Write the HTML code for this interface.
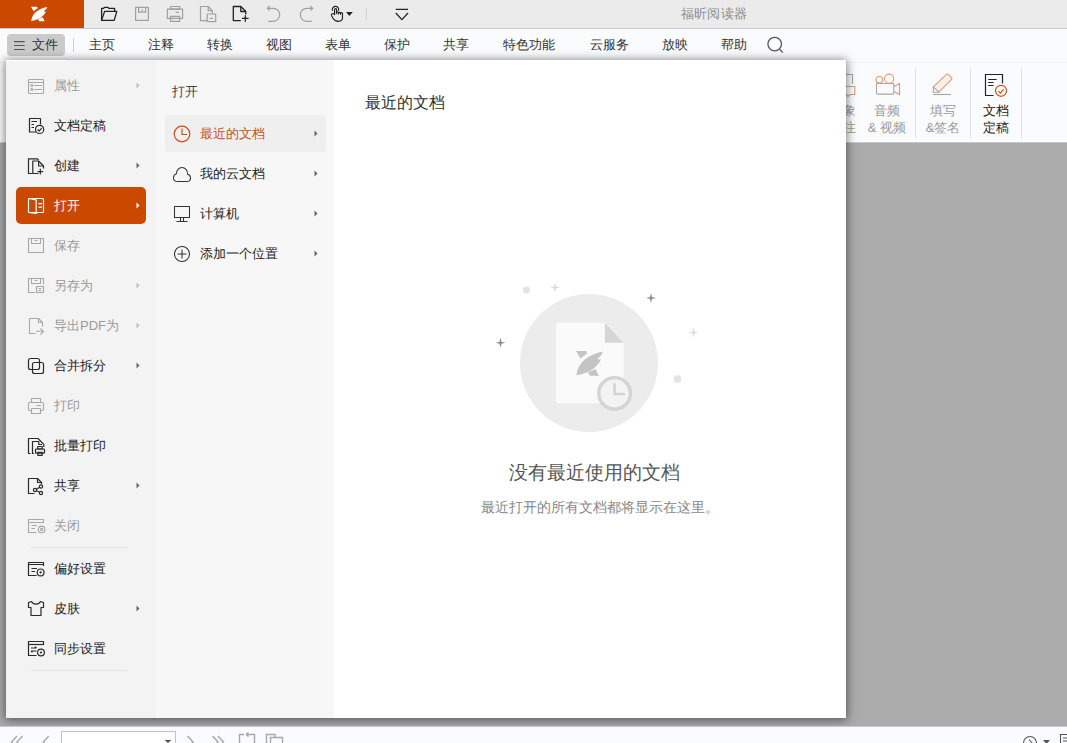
<!DOCTYPE html>
<html><head><meta charset="utf-8">
<style>
*{margin:0;padding:0;box-sizing:border-box}
html,body{width:1067px;height:743px;overflow:hidden;background:#ababab;font-family:"Liberation Sans",sans-serif;color:#333;position:relative}
.a{position:absolute;white-space:nowrap}
#title{left:0;top:0;width:1067px;height:28px;background:#ebebeb}
#tline{left:0;top:28px;width:1067px;height:1px;background:#c4c8d7}
#logo{left:0;top:0;width:84px;height:28px;background:#cb4800}
#apptitle{left:681px;top:6px;letter-spacing:0.2px;font-size:13px;color:#8c8c8c;line-height:16px}
#menubar{left:0;top:29px;width:1067px;height:113px;background:#fafbfd}
#rline{left:0;top:62px;width:1067px;height:1px;background:#f1f1f4}
#status{left:0;top:726px;width:1067px;height:17px;background:#fafbfd}
#sline{left:0;top:726px;width:1067px;height:1px;background:#c4c8d7}
.mi{top:37px;font-size:13px;line-height:16px;color:#333}
#filebtn{left:7px;top:33.6px;width:58px;height:22.7px;background:#cbcbcb;border-radius:4px}
#panel{left:6px;top:60px;width:840px;height:658px;background:#fff;box-shadow:0 1px 9px 1px rgba(0,0,0,.5)}
#col1{left:6px;top:60px;width:150px;height:658px;background:#f3f3f3}
#col2{left:156px;top:60px;width:178px;height:658px;background:#f7f7f7}
.it{left:54px;font-size:13px;line-height:16px;color:#222}
.dis{color:#9a9a9a}
#hl{left:16px;top:187px;width:130px;height:37px;background:#cb4800;border-radius:5px}
#hl2{left:165px;top:115px;width:161px;height:37px;background:#efefef;border-radius:4px}
.sep{left:31px;width:96px;height:1px;background:#e1e4ee}
.rt{font-size:13px;line-height:17px;color:#9a9a9a;text-align:center}
.rsep{top:68px;width:1px;height:70px;background:#dfe0e8}
</style></head><body>
<div id="title" class="a"></div>
<div id="logo" class="a"></div>
<div id="tline" class="a"></div>
<div id="apptitle" class="a">福昕阅读器</div>
<div id="menubar" class="a"></div>
<div id="rline" class="a"></div>
<div class="a" style="left:0;top:141px;width:1067px;height:1px;background:#fff"></div>
<div class="a" style="left:0;top:142px;width:1067px;height:1px;background:#c3c7d6"></div>
<div id="filebtn" class="a"></div>
<div class="a mi" style="left:32px">文件</div>
<div class="a" style="left:73px;top:38px;width:1px;height:14px;background:#d0d0d0"></div>
<svg class="a" style="left:0;top:28px" width="800" height="34" viewBox="0 28 800 34"><g fill="none" stroke="#555" stroke-width="1.2"><path d="M14,41.6 H24.7 M14,45.5 H24.7 M14,49.5 H24.7"/></g><g fill="none" stroke="#555" stroke-width="1.3"><circle cx="774.7" cy="44.1" r="6.8"/><path d="M779.6,49.2 L782.8,52.6"/></g></svg>
<div class="a mi" style="left:89px">主页</div>
<div class="a mi" style="left:148px">注释</div>
<div class="a mi" style="left:207px">转换</div>
<div class="a mi" style="left:266px">视图</div>
<div class="a mi" style="left:325px">表单</div>
<div class="a mi" style="left:384px">保护</div>
<div class="a mi" style="left:443px">共享</div>
<div class="a mi" style="left:503px">特色功能</div>
<div class="a mi" style="left:590px">云服务</div>
<div class="a mi" style="left:662px">放映</div>
<div class="a mi" style="left:721px">帮助</div>

<!-- ribbon right partial -->
<div class="a rt" style="left:828px;top:102px;width:30px">影象<br>批注</div>
<svg class="a" style="left:830px;top:70px" width="30" height="30" viewBox="830 70 30 30"><g fill="none" stroke-width="1.1"><path d="M838,83.5 V74.5 H852.5 V84" stroke="#a8a8a8"/><path d="M843,86.5 H854.8 V94.5 H850 L848,96.5 L846,94.5 H840 V86.5" stroke="#e09a78"/></g></svg>
<div class="a rt" style="left:862px;top:102px;width:50px">音频<br>&amp; 视频</div>
<div class="a rsep" style="left:915px"></div>
<div class="a rt" style="left:918px;top:102px;width:50px">填写<br>&amp;签名</div>
<div class="a rsep" style="left:970px"></div>
<div class="a rt" style="left:971px;top:102px;width:50px;color:#222">文档<br>定稿</div>
<div class="a rsep" style="left:1021px"></div>


<div id="panel" class="a"></div>
<div id="col1" class="a"></div>
<div id="col2" class="a"></div>
<div class="a" style="left:6px;top:60px;width:60px;height:1px;background:#fff"></div>
<div id="hl" class="a"></div>
<div id="hl2" class="a"></div>

<div class="a it dis" style="top:78px">属性</div>
<div class="a it" style="top:118px">文档定稿</div>
<div class="a it" style="top:158px">创建</div>
<div class="a it" style="top:198px;color:#fff">打开</div>
<div class="a it dis" style="top:238px">保存</div>
<div class="a it dis" style="top:278px">另存为</div>
<div class="a it dis" style="top:318px">导出PDF为</div>
<div class="a it" style="top:358px">合并拆分</div>
<div class="a it dis" style="top:398px">打印</div>
<div class="a it" style="top:438px">批量打印</div>
<div class="a it" style="top:478px">共享</div>
<div class="a it dis" style="top:518px">关闭</div>
<div class="a sep" style="top:547px"></div>
<div class="a it" style="top:561px">偏好设置</div>
<div class="a it" style="top:601px">皮肤</div>
<div class="a it" style="top:641px">同步设置</div>
<div class="a sep" style="top:670px"></div>

<div class="a it" style="left:172px;top:84px;color:#444">打开</div>
<div class="a it" style="left:200px;top:126px;color:#c8501c">最近的文档</div>
<div class="a it" style="left:200px;top:166px">我的云文档</div>
<div class="a it" style="left:200px;top:206px">计算机</div>
<div class="a it" style="left:200px;top:246px">添加一个位置</div>

<div class="a" style="left:365px;top:93px;font-size:16px;line-height:19px;color:#333">最近的文档</div>
<div class="a" style="left:509px;top:461px;font-size:19px;line-height:23px;color:#555">没有最近使用的文档</div>
<div class="a" style="left:481px;top:499px;font-size:13.5px;line-height:17px;color:#888">最近打开的所有文档都将显示在这里。</div>


<div id="status" class="a"></div>
<div id="sline" class="a"></div>
<div class="a" style="left:61px;top:731px;width:115px;height:14px;border:1px solid #bcc1d4;background:#fff"></div>
<svg class="a" style="left:0;top:0" width="1067" height="743" viewBox="0 0 1067 743">
<g fill="none" stroke-linejoin="round" stroke-linecap="butt">
<!-- logo -->
<g fill="#fff" stroke="none" transform="translate(31,6.8) scale(0.6,0.585) translate(-576,-351)"><path d="M576.1,351.1 H586.2 L587.1,353.6 L580.2,358.6 Z"/><path d="M576.4,375.2 C578,362 588,354.5 603,351.4 C602.2,354.2 600.3,357 597.4,358.3 L598.5,359.4 L601,359.4 C596.5,368 588.5,373.5 576.4,375.2 Z"/><path d="M587.9,372.4 L595.5,369 L598.8,375.7 L589.8,375.7 Z"/></g>
<!-- title bar icons -->
<g stroke="#222" stroke-width="1.3">
<path d="M101.6,20.4 V8.4 H103.6 L104.4,7.4 H108 L108.8,8.4 H114.6 V11.4"/>
<path d="M101.6,20.4 L104.6,11.4 H116.8 L114.2,20.4 Z"/>
</g>
<g stroke="#a0a0a0" stroke-width="1.2">
<rect x="135.6" y="7.4" width="12.8" height="12.9"/>
<path d="M138.6,7.4 V12.2 H145.6 V7.4 M141.4,10.2 H142.8"/>
<rect x="167.4" y="9.2" width="15.2" height="9.2"/>
<rect x="170.5" y="6.5" width="9.1" height="2.7"/>
<rect x="170.5" y="16.3" width="9.1" height="5.1"/>
<path d="M175.8,12.3 H179"/>
<path d="M207,20.6 H200.5 V6.5 H208.2 L212.4,10.7 V14"/>
<path d="M208.2,6.5 V10.7 H212.4"/>
<rect x="207.2" y="14" width="8.5" height="7.6"/>
<path d="M209.6,18.4 H213"/>
<path d="M279.6,14.8 M268.2,21.3 H273.3 A6.4,6.5 0 0 0 273.3,8.3 H267.4 M269.6,6 L267.3,8.3 L269.6,10.6"/>
<path d="M311.8,21.3 H306.7 A6.4,6.5 0 0 1 306.7,8.3 H312.6 M310.4,6 L312.7,8.3 L310.4,10.6"/>
</g>
<g stroke="#222" stroke-width="1.3">
<path d="M240.8,20.6 H233.3 V6.5 H240.8 L245.8,11.5 V14.5"/>
<path d="M240.8,6.5 V11.5 H245.8"/>
<path d="M242,18.4 H248.6 M245.3,15.2 V21.8"/>
<path d="M395.8,9.3 H408 M395.8,13 L401.9,19.6 L408,13"/>
</g>
<!-- hand -->
<g stroke="#222" stroke-width="1.15" fill="none" stroke-linecap="round">
<path d="M334.6,14.6 V9.6 A1,1 0 0 1 336.6,9.6 V13.6 M336.6,12.7 A0.95,0.95 0 0 1 338.5,12.7 V14 M338.5,13.3 A0.95,0.95 0 0 1 340.4,13.3 V14.3 M340.4,13.7 A1.05,1.05 0 0 1 342.5,13.7 V17.6 C342.5,20 340.6,21.4 338.2,21.4 C335.6,21.4 334,20 332.8,18 L331.4,15.3 C330.9,14.2 332.3,13.1 333.5,13.7 L334.6,14.6"/>
<path d="M332.4,10.4 A3.2,3.2 0 1 1 338.6,10.4"/>
</g>
<path d="M346,12 H352.8 L349.4,16 Z" fill="#222"/>
<path d="M366.3,8 V20.7" stroke="#cfcfcf" stroke-width="1"/>
</g>
</svg>


<svg class="a" style="left:0;top:0" width="1067" height="743" viewBox="0 0 1067 743">
<g fill="none" stroke-linejoin="round">
<!-- col1 icons -->
<g stroke="#a8a8a8" stroke-width="1.1">
<rect x="28.5" y="79.5" width="15" height="14" rx="0.8"/>
<path d="M28.5,82.5 H43.5 M34,85.5 H42 M34,89.5 H42"/>
<circle cx="31.8" cy="85.5" r="1"/><circle cx="31.8" cy="89.5" r="1"/>
</g>
<g stroke="#2a2a2a" stroke-width="1.2">
<path d="M36,132 H29.5 V118.5 H40.5 V124.5"/>
<path d="M31.5,121.5 H37 M31.5,124.5 H34 M31.5,127.5 H34"/>
<circle cx="39.6" cy="129.4" r="4.1"/>
<path d="M37.6,129.5 L39.1,131 L41.8,128.2"/>
</g>
<g stroke="#2a2a2a" stroke-width="1.2">
<path d="M32.5,173.5 H28.5 V158.8 H37.5 L38.6,160"/>
<path d="M38.5,173.5 H32.8 V161 H38.6 L43.5,166 V168.5"/>
<path d="M38.6,161 V166 H43.5"/>
<path d="M37.5,171.6 H43.2 M40.3,168.8 V174.5"/>
</g>
<g stroke="#fff" stroke-width="1.2">
<rect x="28.5" y="198.5" width="15" height="14" rx="1"/>
<path d="M28.5,198.5 L36.2,199.8 V213.4 L28.5,212.5"/>
<path d="M38.5,203.6 H42 M38.5,207.2 H42"/>
</g>
<g stroke="#a8a8a8" stroke-width="1.1">
<rect x="28.5" y="238.5" width="15" height="14"/>
<path d="M31.5,238.5 V243.5 H40.5 V238.5 M34.5,240.5 H37.5"/>
<path d="M35,292.5 H28.5 V278.5 H43.5 V284.5"/>
<path d="M31.5,278.5 V283.5 H40.5 V278.5 M34.5,280.5 H37.5"/>
<rect x="36.5" y="286.5" width="7" height="6"/>
<path d="M38.5,288.5 H41.5 M38.5,290.5 H41.5"/>
<path d="M35.5,333.5 H29.5 V318.5 H38.5 L42.5,322.5 V326.5"/>
<path d="M38.5,318.5 V322.5 H42.5"/>
<path d="M36,331.3 H43.5 M40.5,328.5 L43.5,331.3 L40.5,334.5"/>
</g>
<g stroke="#2a2a2a" stroke-width="1.2">
<rect x="28.5" y="358.5" width="11" height="11" rx="2"/>
<rect x="32.5" y="362.5" width="11" height="11" rx="2"/>
</g>
<g stroke="#a8a8a8" stroke-width="1.1">
<rect x="31.5" y="398.5" width="9" height="4"/>
<path d="M31.5,410.5 H30 A1.5,1.5 0 0 1 28.5,409 V404 A1.5,1.5 0 0 1 30,402.5 H42 A1.5,1.5 0 0 1 43.5,404 V409 A1.5,1.5 0 0 1 42,410.5 H40.5"/>
<rect x="31.5" y="408.5" width="9" height="5"/>
<path d="M36.5,405.5 H41"/>
</g>
<g stroke="#2a2a2a" stroke-width="1.2">
<path d="M30.5,453.5 H28.5 V438.5 H38 L43.8,444.3 V447"/>
<path d="M34,453.5 H32.5 V441.5 H38.8 V444.5 H42"/>
<rect x="37.8" y="446.5" width="4.4" height="2.5"/>
<rect x="35.5" y="449" width="9" height="4.2" rx="0.8"/>
<rect x="37.8" y="452.3" width="4.4" height="3"/>
<path d="M34.5,493.5 H28.5 V478.5 H37.5 L41.5,482.5 V484"/>
<path d="M37.5,478.5 V482.5 H41.5"/>
<circle cx="35" cy="490" r="1.6"/><circle cx="41" cy="486.5" r="1.6"/><circle cx="41" cy="493" r="1.6"/>
<path d="M36.4,489.2 L39.6,487.3 M36.4,490.8 L39.6,492.2"/>
</g>
<g stroke="#a8a8a8" stroke-width="1.1">
<path d="M36.5,532.5 H28.5 V519.5 H43.5 V523"/>
<path d="M28.5,522.5 H43.5 M31.5,525.5 H37 M31.5,528.5 H35"/>
<circle cx="41.6" cy="529.4" r="3.3"/>
<path d="M40.2,528 L43,530.8 M43,528 L40.2,530.8"/>
</g>
<g stroke="#2a2a2a" stroke-width="1.2">
<path d="M36.5,575.5 H28.5 V562.5 H43.5 V566"/>
<path d="M28.5,564.5 H43.5 M31.5,568.5 H37 M31.5,571.5 H35"/>
<circle cx="40.6" cy="572.4" r="3.4"/>
<circle cx="40.6" cy="572.4" r="1.1" fill="#2a2a2a" stroke="none"/>
<path d="M31.5,601.5 L28.5,602.5 V607.5 H31 V615.5 H41 V607.5 H43.5 V602.5 L40.5,601.5 C39,605 33,605 31.5,601.5 Z"/>
<path d="M36.5,655.5 H28.5 V641.5 H43.5 V645"/>
<path d="M28.5,644.5 H43.5"/>
<path d="M31,648 H36.5 M35,646.7 L36.5,648 M36.5,651 H31 M32.5,652.3 L31,651"/>
<circle cx="41" cy="652.5" r="3.4"/>
<circle cx="41" cy="652.5" r="1.1" fill="#2a2a2a" stroke="none"/>
</g>
<!-- col1 arrows -->
<g stroke="none">
<path d="M136.5,82.5 V88.5 L139.5,85.5 Z" fill="#bbb"/>
<path d="M136.5,162.5 V168.5 L139.5,165.5 Z" fill="#666"/>
<path d="M136.5,202.5 V208.5 L139.5,205.5 Z" fill="#fff"/>
<path d="M136.5,282.5 V288.5 L139.5,285.5 Z" fill="#bbb"/>
<path d="M136.5,322.5 V328.5 L139.5,325.5 Z" fill="#bbb"/>
<path d="M136.5,362.5 V368.5 L139.5,365.5 Z" fill="#666"/>
<path d="M136.5,482.5 V488.5 L139.5,485.5 Z" fill="#666"/>
<path d="M136.5,605.5 V611.5 L139.5,608.5 Z" fill="#666"/>
<path d="M314.5,130.5 V136.5 L317.5,133.5 Z" fill="#666"/>
<path d="M314.5,170.5 V176.5 L317.5,173.5 Z" fill="#666"/>
<path d="M314.5,210.5 V216.5 L317.5,213.5 Z" fill="#666"/>
<path d="M314.5,250.5 V256.5 L317.5,253.5 Z" fill="#666"/>
</g>
<!-- col2 icons -->
<g stroke="#c8501c" stroke-width="1.2">
<circle cx="182" cy="134" r="7.8"/>
<path d="M182,128.5 V134.5 H187"/>
</g>
<g stroke="#333" stroke-width="1.05">
<path d="M177.8,181.5 H186.8 C189,181.5 190.5,179.8 190.5,177.9 C190.5,176 189.3,174.6 187.6,174.3 C187.6,170.3 185.2,167.5 182,167.5 C178.8,167.5 176.4,170.3 176.4,173.8 C174.6,174.4 173.5,176 173.5,177.9 C173.5,180 175.3,181.5 177.8,181.5 Z"/>
<rect x="174.5" y="206.5" width="15" height="11"/>
<path d="M180.5,217.5 V221.5 M183.5,217.5 V221.5 M176.5,221.5 H187.5"/>
<circle cx="182" cy="254" r="7.5"/>
<path d="M182,249.5 V258.5 M177.5,254 H186.5"/>
</g>
</g>
</svg>


<svg class="a" style="left:0;top:0" width="1067" height="743" viewBox="0 0 1067 743">
<!-- empty state -->
<circle cx="589" cy="363" r="69" fill="#ececec"/>
<path d="M559,322.7 H604.8 L623.6,342.7 V400.3 A3,3 0 0 1 620.6,403.3 H559 A3,3 0 0 1 556,400.3 V325.7 A3,3 0 0 1 559,322.7 Z" fill="#fafafa"/>
<path d="M604.8,322.7 L623.6,342.7 H604.8 Z" fill="#d6d6d6"/>
<g fill="#c4c4c4"><g id="lg"><path d="M576.1,351.1 H586.2 L587.1,353.6 L580.2,358.6 Z"/>
<path d="M576.4,375.2 C578,362 588,354.5 603,351.4 C602.2,354.2 600.3,357 597.4,358.3 L598.5,359.4 L601,359.4 C596.5,368 588.5,373.5 576.4,375.2 Z"/>
<path d="M587.9,372.4 L595.5,369 L598.8,375.7 L589.8,375.7 Z"/></g></g>
<circle cx="614.6" cy="393.4" r="15.8" fill="#f3f3f3" stroke="#d4d4d4" stroke-width="3.4"/>
<path d="M614.6,384.3 V394 H624.2" fill="none" stroke="#d4d4d4" stroke-width="2.6" stroke-linecap="round" stroke-linejoin="round"/>
<circle cx="526.5" cy="290" r="3.5" fill="#e3e3e3"/>
<circle cx="677.5" cy="379" r="3.8" fill="#e3e3e3"/>
<g fill="#dcdcdc">
<path d="M555,282.5 L556,286.6 L560,287.5 L556,288.4 L555,292.5 L554,288.4 L550,287.5 L554,286.6 Z"/>
<path d="M693.5,327.5 L694.5,331.6 L698.5,332.5 L694.5,333.4 L693.5,337.5 L692.5,333.4 L688.5,332.5 L692.5,331.6 Z"/>
</g>
<g fill="#8e8e8e">
<path d="M651,293 L652,297 L656,298 L652,299 L651,303 L650,299 L646,298 L650,297 Z"/>
<path d="M500.5,337.8 L501.5,341.8 L505.5,342.8 L501.5,343.8 L500.5,347.8 L499.5,343.8 L495.5,342.8 L499.5,341.8 Z"/>
</g>
<!-- ribbon icons -->
<g fill="none" stroke-width="1.1">
<rect x="876.5" y="83.5" width="17.3" height="10.6" rx="0.8" stroke="#a8a8a8"/>
<circle cx="879.3" cy="79.8" r="3.3" stroke="#e09a78"/>
<circle cx="889.1" cy="78.7" r="4.6" stroke="#e09a78"/>
<path d="M893.8,86.5 L899.5,83.5 V94.5 L893.8,91.5" stroke="#e09a78"/>
<path d="M933.3,86.8 L946.5,74.3 A1.2,1.2 0 0 1 948.2,74.3 L951.6,77.6 A1.2,1.2 0 0 1 951.6,79.3 L938.8,92.2" stroke="#e09a78" fill="#fcefe6"/>
<path d="M933.3,86.8 V92.2 H938.8 Z" stroke="#a8a8a8" fill="#fafbfd"/>
<path d="M933.1,94.5 H951" stroke="#a8a8a8"/>
<g stroke="#222" stroke-width="1.2">
<path d="M993.5,95.5 H985.5 V74.5 H1002.5 V83.5"/>
<path d="M988.2,79.5 H996.6 M988.2,82.5 H993.6 M988.2,85.5 H993.6"/>
</g>
<circle cx="1001" cy="90.8" r="5.5" stroke="#c8501c" stroke-width="1.2" fill="#fafbfd"/>
<path d="M998.4,91.1 L1000.4,93.2 L1003.6,89.4" stroke="#c8501c" stroke-width="1.2"/>
</g>
<!-- status bar icons -->
<g fill="none" stroke="#a8a8a8" stroke-width="1.4">
<path d="M17,736 L11.5,742 L16.5,747 M22.5,736 L17,742 L22,747"/>
<path d="M48.8,736 L43.3,742 L48.3,747"/>
<path d="M187.5,736 L193,742 L188,747 M212.5,736 L218,742 L213,747 M218,736 L223.5,742 L218.5,747"/>
<path d="M239.5,745 V734.5 H244 M251,734.5 H254.5 V745 M246,734.5 L248.5,732.5 M246,734.5 L248.5,736.5 M246,734.5 H251"/>
<path d="M266.5,745 V734.5 H275 V737 M270.5,745 V737.5 H282.5 V745"/>
</g>
<path d="M164.5,740 H171.5 L168,743 Z" fill="#555"/>
<g fill="none" stroke="#555" stroke-width="1.1">
<circle cx="1030" cy="743" r="6.5"/>
<path d="M1029,739.5 L1032,743"/>
<path d="M1060.5,752 V734.5 H1067"/>
<path d="M1063,738 H1067 M1063,741 H1067"/>
</g>
<path d="M1043,740 H1050 L1046.5,744 Z" fill="#555"/>
</svg>

</body></html>
